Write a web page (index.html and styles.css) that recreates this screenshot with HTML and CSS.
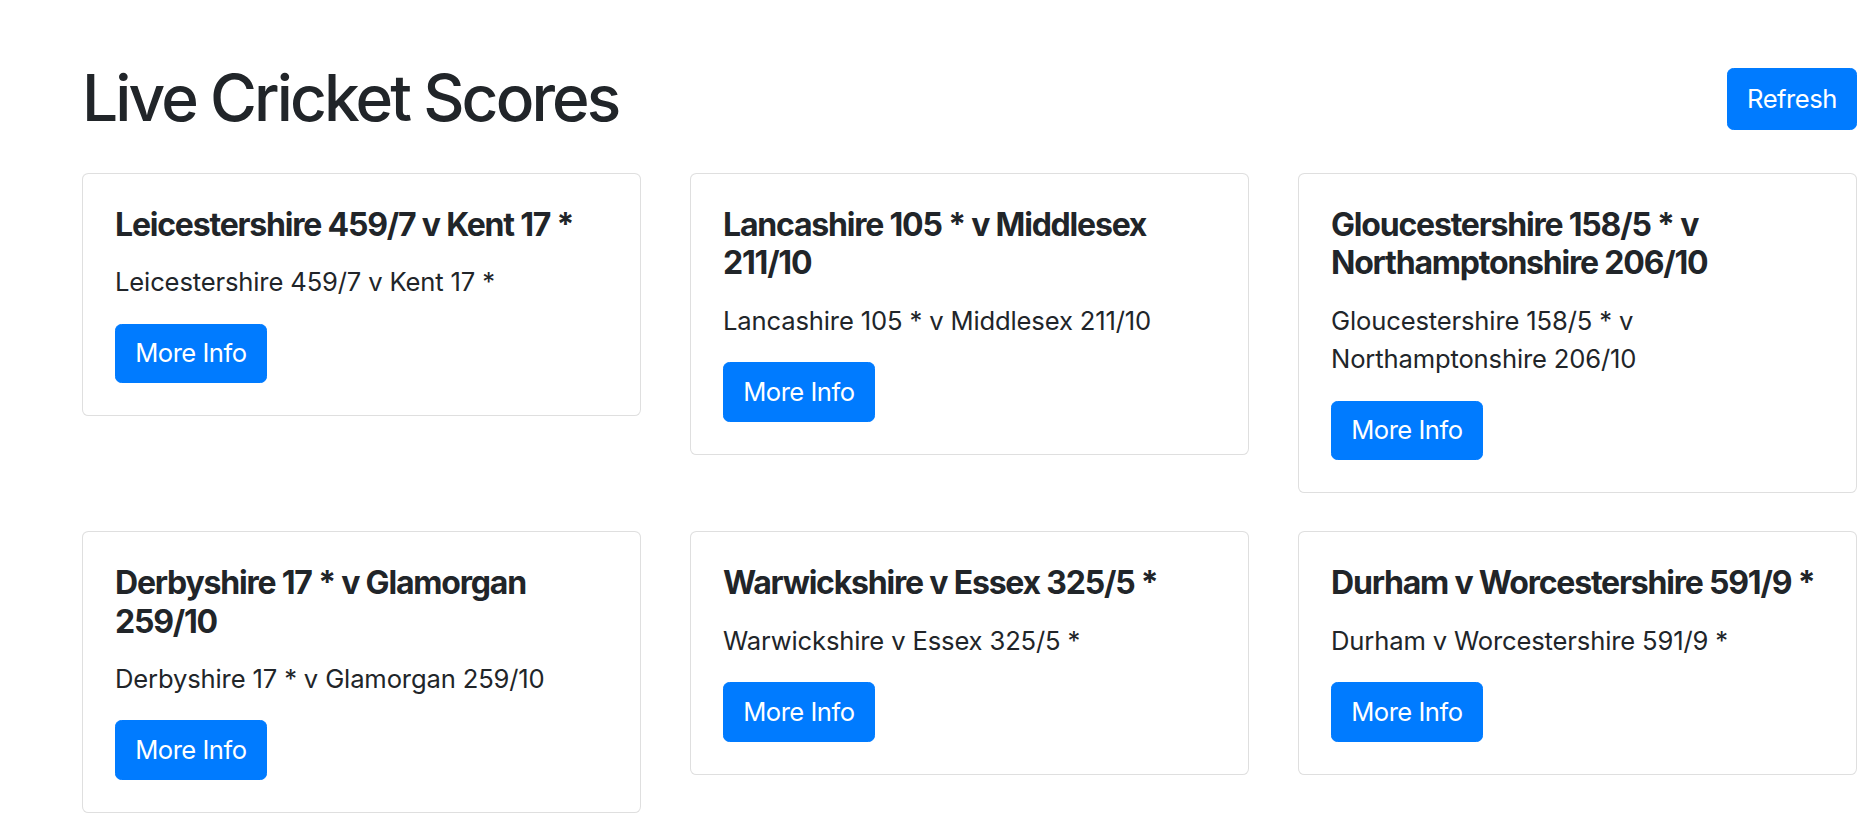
FILE: index.html
```html
<!DOCTYPE html>
<html lang="en">
<head>
<meta charset="utf-8">
<title>Live Cricket Scores</title>
<link rel="stylesheet" href="styles.css">
</head>
<body>
<div class="page">
  <header class="header">
    <h1 class="title">Live Cricket Scores</h1>
    <button class="btn" type="button">Refresh</button>
  </header>
  <div class="grid">
    <div class="card"><div class="card-body">
      <h5 class="card-title">Leicestershire 459/7 v Kent 17 *</h5>
      <p class="card-text">Leicestershire 459/7 v Kent 17 *</p>
      <a class="btn" href="#">More Info</a>
    </div></div>
    <div class="card"><div class="card-body">
      <h5 class="card-title">Lancashire 105 * v Middlesex 211/10</h5>
      <p class="card-text">Lancashire 105 * v Middlesex 211/10</p>
      <a class="btn" href="#">More Info</a>
    </div></div>
    <div class="card"><div class="card-body">
      <h5 class="card-title">Gloucestershire 158/5 * v Northamptonshire 206/10</h5>
      <p class="card-text">Gloucestershire 158/5 * v Northamptonshire 206/10</p>
      <a class="btn" href="#">More Info</a>
    </div></div>
    <div class="card"><div class="card-body">
      <h5 class="card-title">Derbyshire 17 * v Glamorgan 259/10</h5>
      <p class="card-text">Derbyshire 17 * v Glamorgan 259/10</p>
      <a class="btn" href="#">More Info</a>
    </div></div>
    <div class="card"><div class="card-body">
      <h5 class="card-title">Warwickshire v Essex 325/5 *</h5>
      <p class="card-text">Warwickshire v Essex 325/5 *</p>
      <a class="btn" href="#">More Info</a>
    </div></div>
    <div class="card"><div class="card-body">
      <h5 class="card-title">Durham v Worcestershire 591/9 *</h5>
      <p class="card-text">Durham v Worcestershire 591/9 *</p>
      <a class="btn" href="#">More Info</a>
    </div></div>
  </div>
</div>
</body>
</html>
```

FILE: styles.css
```css
html, body {
  margin: 0;
  padding: 0;
  background: #fff;
}

body {
  font-family: Inter, "Noto Sans", sans-serif;
  color: #212529;
}

.page {
  padding: 60px 17px 0 82px;
}

.header {
  display: flex;
  justify-content: space-between;
  align-items: center;
  margin-bottom: 36px;
}

.title {
  margin: 0;
  font-size: 64px;
  font-weight: 500;
  line-height: 1.2;
  letter-spacing: -2.9px;
}

.header .btn {
  padding: 10.5px 19.2px 11px;
  margin-top: 2px;
}

.grid {
  display: grid;
  grid-template-columns: repeat(3, 1fr);
  column-gap: 49px;
  row-gap: 38px;
  align-items: start;
}

.card {
  border: 1px solid rgba(0, 0, 0, 0.125);
  border-radius: 6.4px;
  background: #fff;
}

.card-body {
  padding: 32px;
}

.card-title {
  margin: 0 0 19.2px;
  font-size: 32px;
  font-weight: 700;
  line-height: 1.2;
  letter-spacing: -1.2px;
}

.card-text {
  margin: 0 0 22px;
  font-size: 25.6px;
  line-height: 1.5;
  letter-spacing: -0.15px;
}

.btn {
  display: inline-block;
  background: #007bff;
  color: #fff;
  border: 1px solid #007bff;
  border-radius: 6.4px;
  padding: 9.6px 19.2px;
  font-family: inherit;
  font-size: 25.6px;
  font-weight: 400;
  line-height: 1.5;
  letter-spacing: -0.5px;
  text-decoration: none;
  cursor: pointer;
}
```
